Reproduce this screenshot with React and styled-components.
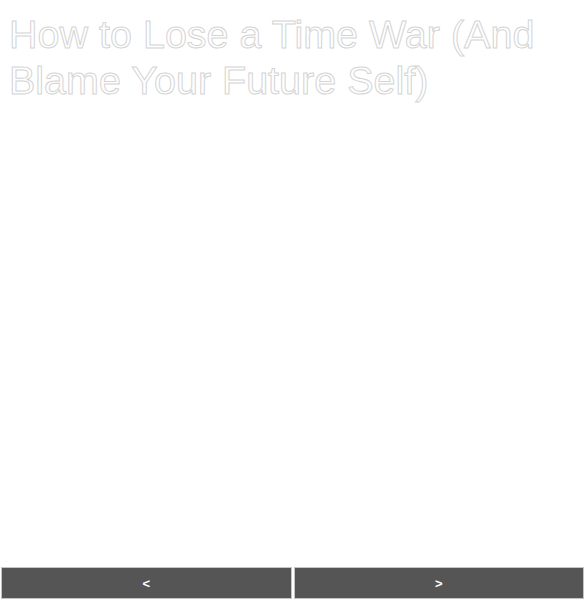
import React from 'react';
import styled, { createGlobalStyle } from 'styled-components';

const Global = createGlobalStyle`
  html, body {
    margin: 0;
    padding: 0;
    height: 100%;
    background: #fff;
  }
  #root {
    height: 100%;
  }
`;

const Page = styled.main`
  height: 100vh;
  display: flex;
  flex-direction: column;
  font-family: "Liberation Sans", Arial, sans-serif;
`;

const Title = styled.h1`
  flex: 1;
  margin: 0;
  padding: 11px 9px 0;
  font-size: 39.5px;
  font-weight: normal;
  line-height: 46px;
  color: #fff;
  -webkit-text-stroke: 1px #d4d4d4;
`;

const Nav = styled.nav`
  display: flex;
  gap: 2px;
  padding: 0 1px 1px 1px;
`;

const NavButton = styled.button`
  flex: 1;
  height: 32px;
  background: #555;
  color: #fff;
  border: 1px solid #c4c4c4;
  font-family: "Liberation Sans", Arial, sans-serif;
  font-size: 13px;
  font-weight: bold;
  cursor: pointer;
`;

export default function App() {
  return (
    <>
      <Global />
      <Page>
        <Title>How to Lose a Time War (And Blame Your Future Self)</Title>
        <Nav>
          <NavButton>{'<'}</NavButton>
          <NavButton>{'>'}</NavButton>
        </Nav>
      </Page>
    </>
  );
}
